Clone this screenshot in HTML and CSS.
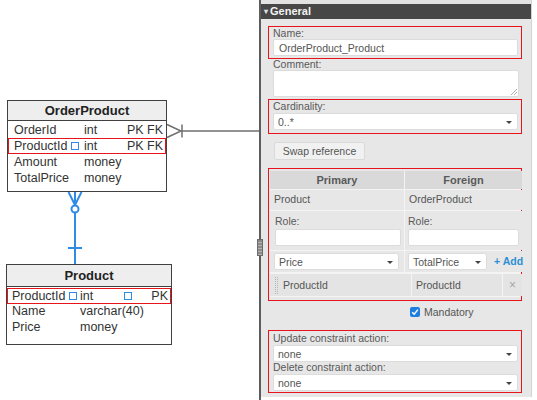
FILE: index.html
```html
<!DOCTYPE html>
<html>
<head>
<meta charset="utf-8">
<link rel="stylesheet" href="styles.css">
</head>
<body>
<div class="app">
  <div class="canvas">
    <svg class="links" width="259" height="400" viewBox="0 0 259 400">
      <g stroke="#6f6f6f" stroke-width="1.5" fill="none">
        <line x1="182" y1="131" x2="259" y2="131"/>
        <line x1="182" y1="124.5" x2="182" y2="137.5"/>
        <polyline points="167,124.5 181,131 167,137.5"/>
      </g>
      <g stroke="#2f8be6" stroke-width="2" fill="none">
        <line x1="68.5" y1="192" x2="75" y2="205"/>
        <line x1="81.5" y1="192" x2="75" y2="205"/>
        <line x1="75" y1="192" x2="75" y2="205"/>
        <circle cx="75" cy="209" r="3.5" fill="#fff"/>
        <line x1="75" y1="212.5" x2="75" y2="264"/>
        <line x1="68" y1="248" x2="82" y2="248"/>
      </g>
    </svg>
    <div class="entity e-order">
      <div class="ent-head">OrderProduct</div>
      <div class="ent-body">
        <div class="ent-row"><span class="c-name">OrderId</span><span class="c-type">int</span><span class="c-key">PK FK</span></div>
        <div class="ent-row sel"><span class="c-name">ProductId<i class="sq"></i></span><span class="c-type">int</span><span class="c-key">PK FK</span></div>
        <div class="ent-row"><span class="c-name">Amount</span><span class="c-type">money</span><span class="c-key"></span></div>
        <div class="ent-row"><span class="c-name">TotalPrice</span><span class="c-type">money</span><span class="c-key"></span></div>
      </div>
    </div>
    <div class="entity e-product">
      <div class="ent-head">Product</div>
      <div class="ent-body">
        <div class="ent-row sel"><span class="c-name">ProductId<i class="sq"></i></span><span class="c-type">int</span><i class="sq sq2"></i><span class="c-key">PK</span></div>
        <div class="ent-row"><span class="c-name">Name</span><span class="c-type">varchar(40)</span><span class="c-key"></span></div>
        <div class="ent-row"><span class="c-name">Price</span><span class="c-type">money</span><span class="c-key"></span></div>
      </div>
    </div>
  </div>
  <div class="splitter"><div class="grip"></div></div>
  <div class="panel">
    <div class="ptop"></div>
    <div class="phead"><span class="tri">&#9662;</span>General</div>

    <div class="box box-name">
      <div class="lbl">Name:</div>
      <div class="inp">OrderProduct_Product</div>
    </div>

    <div class="plain">
      <div class="lbl">Comment:</div>
      <div class="txa"><svg class="rsz" width="6" height="6" viewBox="0 0 6 6"><path d="M0 6L6 0M3 6L6 3" stroke="#999" stroke-width="0.8"/></svg></div>
    </div>

    <div class="box box-card">
      <div class="lbl">Cardinality:</div>
      <div class="inp sel-inp">0..*<i class="arrow"></i></div>
    </div>

    <div class="btn">Swap reference</div>

    <div class="box box-table">
      <div class="grid">
        <div class="th">Primary</div>
        <div class="th">Foreign</div>
        <div class="td t-ent">Product</div>
        <div class="td t-ent">OrderProduct</div>
        <div class="td t-role l"><div class="lbl">Role:</div><div class="inp"></div></div>
        <div class="td t-role r"><div class="lbl">Role:</div><div class="inp"></div></div>
        <div class="td t-sel l"><div class="inp sel-inp">Price<i class="arrow"></i></div></div>
        <div class="td t-sel r"><div class="inp sel-inp small">TotalPrice<i class="arrow"></i></div><span class="add">+ Add</span></div>
        <div class="pair">
          <div class="pc pc1"><span class="dots"></span>ProductId</div>
          <div class="pc pc2">ProductId</div>
          <div class="pc pc3">&#215;</div>
        </div>
      </div>
    </div>

    <div class="mand"><span class="chk"><svg width="8" height="8" viewBox="0 0 8 8"><path d="M1.2 4.2L3.2 6.2L6.9 1.6" stroke="#fff" stroke-width="1.5" fill="none"/></svg></span>Mandatory</div>

    <div class="box box-act">
      <div class="lbl">Update constraint action:</div>
      <div class="inp sel-inp">none<i class="arrow"></i></div>
      <div class="lbl lbl2">Delete constraint action:</div>
      <div class="inp sel-inp">none<i class="arrow"></i></div>
    </div>
  </div>
  <div class="rest"></div>
</div>
</body>
</html>
```

FILE: styles.css
```css
* { box-sizing: border-box; }
html, body { margin: 0; padding: 0; background: #fff; }
body { font-family: "Liberation Sans", Arial, sans-serif; }

.app { display: flex; width: 537px; height: 400px; overflow: hidden; }

/* ---------- diagram canvas ---------- */
.canvas { position: relative; width: 259px; height: 400px; background: #fff; flex: none; }
.links { position: absolute; left: 0; top: 0; }

.entity {
  position: absolute;
  border: 1.3px solid #404040;
  background: #fff;
  color: #333;
  font-size: 12.5px;
}
.e-order { left: 7px; top: 100px; width: 160px; height: 92px; }
.e-product { left: 6px; top: 264px; width: 166px; height: 81px; }

.ent-head {
  height: 20px;
  background: #eeeeee;
  border-bottom: 1.3px solid #404040;
  font-weight: bold;
  font-size: 13px;
  color: #222;
  text-align: center;
  line-height: 19px;
}
.e-product .ent-head { height: 22px; line-height: 21px; }
.ent-body { padding-top: 1px; }
.ent-row {
  display: flex;
  align-items: center;
  height: 16px;
  line-height: 16px;
  padding: 0 2px 0 5px;
  border: 1px solid transparent;
  white-space: nowrap;
}
.e-product .ent-row { height: 15.5px; padding-left: 4px; }
.ent-row.sel { border-color: #e8141c; }
.c-name { width: 70px; display: flex; align-items: center; }
.e-product .c-name { width: 68px; }
.c-type { width: 43px; }
.c-key { flex: 1; text-align: right; }
.sq {
  display: inline-block;
  width: 8px; height: 8px;
  border: 1.4px solid #2f8be6;
  margin-left: 3px;
}
.sq2 { margin-left: 0; }
.e-product .ent-row .c-type { width: 44px; }

/* ---------- splitter ---------- */
.splitter {
  position: relative;
  flex: none;
  width: 2px;
  background: #5d5d5d;
}
.grip {
  position: absolute;
  left: -2px; top: 239px;
  width: 6px; height: 17px;
  background: #8a8a8a;
  border: 1px solid #6a6a6a;
  background-image: repeating-linear-gradient(to bottom, #8a8a8a 0 2px, #b4b4b4 2px 3px);
}

/* ---------- properties panel ---------- */
.panel {
  flex: none;
  width: 271px;
  height: 397px;
  background: #e7e7e7;
  color: #555;
  font-size: 10.5px;
  border-right: 1px solid #d2d2d2;
  display: flex;
  flex-direction: column;
}
.ptop { height: 4px; background: #e2e2e2; flex: none; }
.phead {
  height: 15px;
  background: #474747;
  color: #f2f2f2;
  font-weight: bold;
  font-size: 11px;
  line-height: 15px;
  padding-left: 3px;
  flex: none;
}
.tri { font-size: 8px; color: #ddd; margin-right: 2px; position: relative; top: -1px; }

.box {
  border: 1px solid #e8141c;
  margin-left: 7px;
  margin-right: 9px;
  padding: 0 3px 0 4px;
  flex: none;
}
.lbl { height: 12px; line-height: 12px; color: #595959; white-space: nowrap; }
.inp {
  position: relative;
  height: 17px;
  line-height: 16px;
  background: #fff;
  border: 1px solid #dcdcdc;
  border-radius: 2px;
  padding-left: 5px;
  color: #555;
  white-space: nowrap;
}
.sel-inp { padding-left: 4px; }
.arrow {
  position: absolute;
  right: 5px; top: 7px;
  width: 0; height: 0;
  border-left: 3.5px solid transparent;
  border-right: 3.5px solid transparent;
  border-top: 3.5px solid #444;
}

.box-name { margin-top: 7px; padding-bottom: 2px; }
.plain { margin-left: 12px; width: 246px; flex: none; }
.plain .lbl { height: 11px; line-height: 10px; }
.txa {
  position: relative;
  height: 27px;
  background: #fff;
  border: 1px solid #dcdcdc;
  border-radius: 2px;
}
.rsz { position: absolute; right: 1px; bottom: 1px; }

.box-card { margin-top: 2px; padding-bottom: 3px; }
.box-card .lbl { height: 13px; line-height: 13px; }
.box-card .inp { height: 17px; }

.btn {
  margin: 8px 0 0 13px;
  width: 91px;
  height: 18px;
  line-height: 17px;
  text-align: center;
  background: #f1f1f1;
  border: 1px solid #dadada;
  border-radius: 2px;
  color: #555;
  flex: none;
}

.box-table { margin-top: 8px; padding: 2px 0 3px 1px; }
.grid {
  display: grid;
  grid-template-columns: 134px 117px;
  column-gap: 1px;
  row-gap: 1px;
  background: #f4f4f4;
  padding-bottom: 1px;
}
.th {
  height: 18px;
  line-height: 18px;
  background: #d9d9d9;
  text-align: center;
  font-weight: bold;
  color: #5a5a5a;
  font-size: 11px;
}
.td { background: #e7e7e7; }
.t-ent { height: 20px; line-height: 18px; padding-left: 4px; }
.t-role { height: 39px; padding: 4px 3px 0 5px; }
.t-role.r { padding-left: 3px; }
.t-role .lbl { height: 14px; line-height: 12px; }
.t-role .inp { height: 17px; }
.t-sel { height: 21px; padding: 2px 5px 0 4px; }
.t-sel.r { display: flex; padding-left: 3px; padding-right: 0; }
.t-sel .small { width: 79px; flex: none; }
.add { color: #2d8fd5; font-weight: bold; margin-left: 7px; line-height: 17px; white-space: nowrap; }

.pair {
  grid-column: 1 / -1;
  display: flex;
  gap: 1px;
  height: 22px;
  margin-top: 1px;
}
.pc { background: #e4e4e4; line-height: 22px; height: 22px; color: #555; }
.pc1 { width: 141px; padding-left: 5px; display: flex; align-items: center; }
.pc2 { width: 90px; padding-left: 4px; }
.pc3 { width: 19px; text-align: center; color: #a5a5a5; font-size: 12px; }
.dots {
  display: inline-block;
  width: 3px; height: 17px;
  border-left: 1px dotted #b8b8b8;
  border-right: 1px dotted #b8b8b8;
  margin-right: 5px;
}

.mand {
  display: flex;
  align-items: center;
  margin: 5px 0 0 149px;
  height: 12px;
  flex: none;
  color: #555;
}
.chk {
  display: inline-flex;
  align-items: center;
  justify-content: center;
  width: 10px; height: 10px;
  background: #1f7fe0;
  border-radius: 2px;
  margin-right: 4px;
}

.box-act { margin-top: 12px; padding-bottom: 1px; }
.box-act .lbl { height: 14px; line-height: 14px; }
.box-act .lbl2 { height: 12px; line-height: 11px; }

.rest { flex: 1; background: #fff; }
```
